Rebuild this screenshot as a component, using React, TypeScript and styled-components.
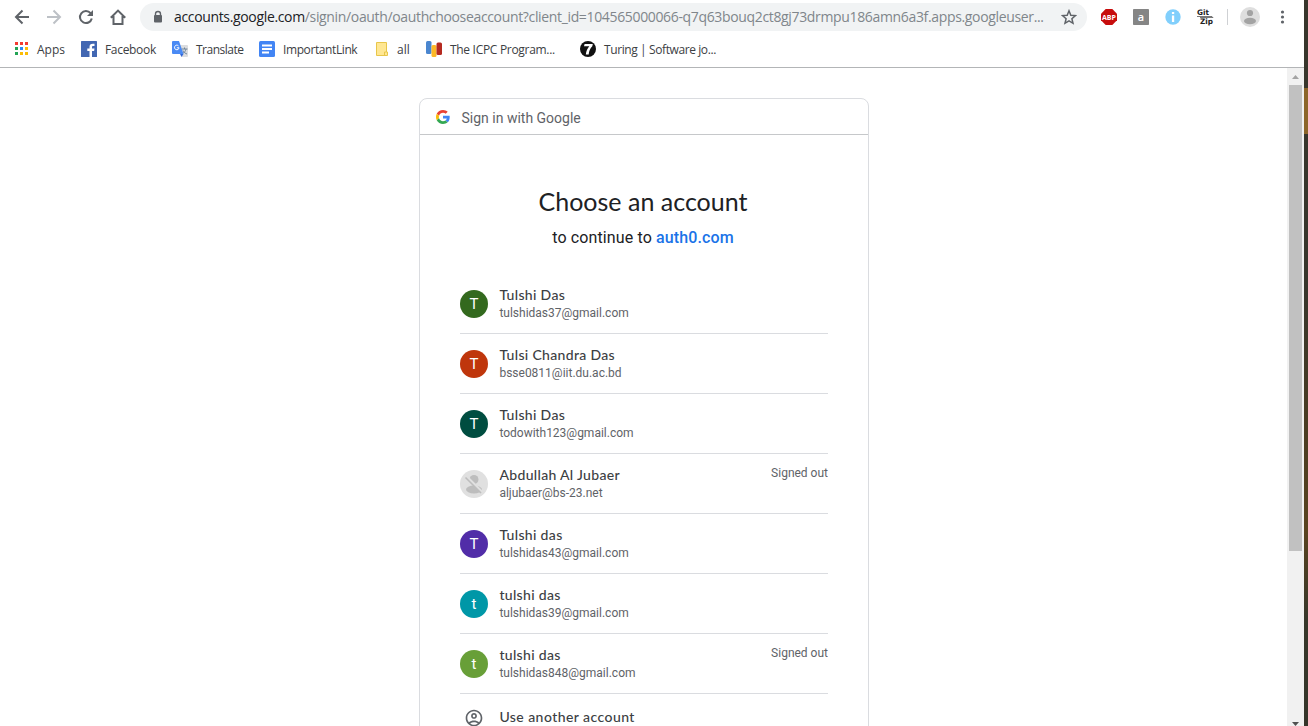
import React from "react";
import styled, { createGlobalStyle } from "styled-components";

const ui = `"Open Sans", "Noto Sans", sans-serif`;
const body = `Roboto, "Liberation Sans", sans-serif`;
const display = `Lato, Roboto, sans-serif`;

const GlobalStyle = createGlobalStyle`
  * { box-sizing: border-box; }
  body { margin: 0; background: #fff; overflow: hidden; }
`;

const Screen = styled.div`
  display: flex;
  width: 1308px;
  height: 726px;
  overflow: hidden;
`;

const Browser = styled.div`
  display: flex;
  flex-direction: column;
  width: 1304px;
  height: 726px;
  background: #fff;
`;

const Desktop = styled.div`
  width: 4px;
  height: 726px;
  background: linear-gradient(#38362c 0 88px, #8c6529 88px 134px, #38362c 134px 290px, #4a3c22 430px, #59431f 530px, #37372a 620px, #35352a 726px);
`;

const Toolbar = styled.div`
  display: flex;
  align-items: center;
  height: 34px;
  padding-left: 14px;
`;

const NavIcons = styled.div`
  display: flex;
  gap: 16px;
  width: 126px;
  svg { display: block; }
`;

const AddressBar = styled.div`
  display: flex;
  align-items: center;
  width: 947px;
  height: 28px;
  padding: 0 10px 0 12px;
  border-radius: 14px;
  background: #f1f3f4;
`;

const Url = styled.div`
  flex: 1;
  margin-left: 10px;
  white-space: nowrap;
  font: 14px/20px ${ui};
  letter-spacing: -0.345px;
  color: #80868b;
  span { color: #202124; }
`;

const Extensions = styled.div`
  display: flex;
  align-items: center;
  margin-left: 14px;
  gap: 16px;
  svg { display: block; overflow: visible; }
  svg:last-child { margin-left: -2px; }
`;

const Divider = styled.div`
  width: 1px;
  height: 16px;
  margin: 0 -4px 0 -3px;
  background: #cfd1d4;
`;

const Bookmarks = styled.div`
  display: flex;
  align-items: center;
  height: 34px;
  padding: 0 0 4px 13px;
  border-bottom: 1px solid #b3b5b7;
`;

const Bookmark = styled.div<{ $width: number; $spacing: number }>`
  display: flex;
  align-items: center;
  gap: 8px;
  width: ${(p) => p.$width}px;
  height: 18px;
  white-space: nowrap;
  font: 12px/16px ${ui};
  letter-spacing: ${(p) => p.$spacing}px;
  color: #3c4043;
  svg { flex: none; }
`;

const Label = styled.span`
  padding-top: 2px;
`;

const Viewport = styled.div`
  display: flex;
  flex: 1;
  min-height: 0;
`;

const Page = styled.main`
  display: flex;
  justify-content: center;
  flex: 1;
  padding-top: 30px;
  overflow: hidden;
`;

const Card = styled.section`
  width: 450px;
  height: 720px;
  margin-left: 1px;
  border: 1px solid #dadce0;
  border-radius: 8px;
`;

const CardHeader = styled.header`
  display: flex;
  align-items: center;
  gap: 11.5px;
  height: 36px;
  padding: 2px 0 0 16px;
  border-bottom: 1px solid #c6c8ca;
  font: 14px/20px ${body};
  color: #5f6368;
  svg { margin-top: -2px; }
`;

const Title = styled.h1`
  margin: 50px 0 0;
  padding-right: 2px;
  text-align: center;
  font: 400 25px/32px ${display};
  color: #202124;
`;

const Subtitle = styled.p`
  margin: 9px 0 0;
  padding-right: 2px;
  text-align: center;
  font: 16px/24px ${body};
  letter-spacing: 0.12px;
  color: #202124;
  b { font-weight: 500; color: #1a73e8; }
`;

const Accounts = styled.ul`
  margin: 24px 40px 0;
  padding: 0;
  list-style: none;
`;

const AccountRow = styled.li`
  display: flex;
  height: 60px;
  padding-top: 11px;
  border-bottom: 1px solid #dadce0;
`;

const Avatar = styled.div<{ $color: string }>`
  display: flex;
  align-items: center;
  justify-content: center;
  width: 28px;
  height: 28px;
  margin: 5px 11.4px 0 0;
  border-radius: 50%;
  background: ${(p) => p.$color};
  font: 15px/28px ${body};
  color: #fff;
`;

const Identity = styled.div`
  flex: 1;
`;

const Name = styled.div`
  font: 500 14px/19px ${display};
  letter-spacing: 0.33px;
  color: #3c4043;
`;

const Email = styled.div`
  margin-top: 1px;
  font: 12px/16px ${body};
  color: #5f6368;
`;

const Status = styled.div`
  font: 12px/16px ${body};
  color: #5f6368;
`;

const AnotherAccount = styled.li`
  display: flex;
  align-items: center;
  gap: 15.4px;
  height: 48px;
  padding-left: 4px;
  ${Name} { margin-top: -3px; letter-spacing: 0.44px; }
`;

const Scrollbar = styled.div`
  display: flex;
  flex-direction: column;
  align-items: center;
  width: 17px;
  background: #f1f1f1;
`;

const ScrollButton = styled.div`
  display: flex;
  height: 17px;
  svg { display: block; }
`;

const Thumb = styled.div`
  width: 13px;
  height: 466px;
  margin-bottom: auto;
  background: #c1c1c1;
`;

const accounts = [
  { name: "Tulshi Das", email: "tulshidas37@gmail.com", color: "#33691e" },
  { name: "Tulsi Chandra Das", email: "bsse0811@iit.du.ac.bd", color: "#bf360c" },
  { name: "Tulshi Das", email: "todowith123@gmail.com", color: "#004d40" },
  { name: "Abdullah Al Jubaer", email: "aljubaer@bs-23.net", color: "#e0e0e0", out: true, blank: true },
  { name: "Tulshi das", email: "tulshidas43@gmail.com", color: "#512da8" },
  { name: "tulshi das", email: "tulshidas39@gmail.com", color: "#0097a7" },
  { name: "tulshi das", email: "tulshidas848@gmail.com", color: "#689f38", out: true },
];

const Back = () => (
  <svg width="16" height="16" viewBox="0 0 16 16" fill="none" stroke="#5f6368" strokeWidth="2"><path d="M15 8H2.5M8.5 1.5L2 8l6.5 6.5" /></svg>
);
const Forward = () => (
  <svg width="16" height="16" viewBox="0 0 16 16" fill="none" stroke="#bdc1c6" strokeWidth="2"><path d="M1 8h12.5M7.5 1.5L14 8l-6.5 6.5" /></svg>
);
const Reload = () => (
  <svg width="16" height="16" viewBox="0 0 16 16"><path d="M12.6 4.2A6 6 0 1 0 13.8 9.5" fill="none" stroke="#5f6368" strokeWidth="2" /><path d="M15 1v6H9z" fill="#5f6368" /></svg>
);
const Home = () => (
  <svg width="16" height="16" viewBox="0 0 16 16" fill="none" stroke="#5f6368" strokeWidth="2"><path d="M.8 8.8L8 1.6l7.2 7.2M.8 8H3.5v7h9V8h2.7" /></svg>
);
const Lock = () => (
  <svg width="12" height="14" viewBox="0 0 12 14"><path d="M3.5 6V4a2.5 2.5 0 0 1 5 0v2" fill="none" stroke="#5f6368" strokeWidth="1.4" /><rect x="2" y="5" width="8" height="7.5" rx="1" fill="#5f6368" /></svg>
);
const Star = () => (
  <svg width="16" height="16" viewBox="0 0 16 16" fill="none" stroke="#5f6368" strokeWidth="1.5"><path d="M8 1.8l1.8 4.4 4.7.4-3.6 3.1 1.1 4.6L8 11.9l-4 2.4 1.1-4.6-3.6-3.1 4.7-.4z" /></svg>
);
const AppsIcon = () => {
  const colors = ["#f33b30", "#f33b30", "#f33b30", "#23a455", "#2a8af6", "#fbbc05", "#23a455", "#fbbc05", "#fbbc05"];
  return (
    <svg width="16" height="16">
      {colors.map((c, i) => <rect key={i} x={2 + (i % 3) * 5} y={1 + Math.floor(i / 3) * 5} width="3" height="3" fill={c} />)}
    </svg>
  );
};
const FacebookIcon = () => (
  <svg width="16" height="16"><rect width="16" height="16" rx=".6" fill="#4267b2" /><path d="M11 16v-6h2.1l.4-2.4H11V6.2c0-.8.3-1.2 1.3-1.2h1.2V2.8c-3.4-.6-5 .6-5 3.1v1.7H6.3V10h2.2v6z" fill="#fff" /></svg>
);
const TranslateIcon = () => (
  <svg width="17" height="16" viewBox="-1 0 17 16">
    <path d="M7 4h8a1 1 0 0 1 1 1v10a1 1 0 0 1-1 1H10z" fill="#dcdddf" />
    <path d="M9.5 8h6M12.5 6.5V8M10.5 12.5c2-1 3-2.5 3.5-4.5M11 9.5c1 2 2.5 3 4 3.5" fill="none" stroke="#70859a" />
    <path d="M1 0h6l4.5 13H1a1 1 0 0 1-1-1V1a1 1 0 0 1 1-1z" fill="#4a8af4" />
    <path d="M8 13h3.5L9.5 16z" fill="#3367d6" />
    <path d="M6.5 4.9A2.3 2.3 0 1 0 7.1 6.8H4.8" fill="none" stroke="#fff" />
  </svg>
);
const DocIcon = () => (
  <svg width="16" height="16"><rect width="16" height="16" rx="1.5" fill="#4285f4" /><path d="M3 4.5h10M3 8h10M3 11.500h7" stroke="#fff" strokeWidth="1.8" /></svg>
);
const NoteIcon = () => (
  <svg width="14" height="16"><path d="M1.5 1.5h10v9.5h1v3.5h-11z" fill="#ffe793" stroke="#e8c64a" /><path d="M9.5 14v-3h2" fill="none" stroke="#e8c64a" /></svg>
);
const IcpcIcon = () => (
  <svg width="16" height="16"><rect x="0" width="5.500" height="13" rx="1.5" fill="#4a86cf" /><rect x="5.5" y="4" width="5" height="12" rx="1.5" fill="#fcb827" /><rect x="10.5" y="1.5" width="5.5" height="12.5" rx="1.5" fill="#b52a20" /></svg>
);
const TuringIcon = () => (
  <svg width="16" height="16"><circle cx="8" cy="8" r="8" fill="#111" /><path d="M4 5.3L4.6 3h8.2l-.5 2.2C10 7.5 9 10 8.7 13.5H5.8C6.2 10 7.5 7.3 9.3 5.3z" fill="#fff" /></svg>
);
const AbpIcon = () => (
  <svg width="16" height="16"><path d="M4.7 0h6.6L16 4.7v6.6L11.3 16H4.7L0 11.3V4.7z" fill="#c70d0d" /><text x="8" y="10.9" textAnchor="middle" fontFamily="Open Sans" fontWeight="700" fontSize="7.8" textLength="14" lengthAdjust="spacingAndGlyphs" fill="#fff">ABP</text></svg>
);
const AIcon = () => (
  <svg width="16" height="16"><rect width="16" height="16" rx=".8" fill="#858585" /><text x="8" y="12" textAnchor="middle" fontFamily="Open Sans" fontWeight="600" fontSize="11" fill="#fff">a</text></svg>
);
const InfoIcon = () => (
  <svg width="16" height="16"><circle cx="8" cy="8" r="7.7" fill="#81cffc" /><path d="M6.9 3h2.3v2H6.900zM6.900 6.500h2.300v6.500H6.900z" fill="#fff" /></svg>
);
const GitZipIcon = () => (
  <svg width="17" height="17"><g fontFamily="DejaVu Sans" fontWeight="700" fontSize="7.5" fill="#222"><text x="0" y="6" textLength="12" lengthAdjust="spacingAndGlyphs">Git</text><text x="3" y="15.2" textLength="13" lengthAdjust="spacingAndGlyphs">Zip</text></g><path d="M0 7.5h15l1 1H3" fill="none" stroke="#555" strokeWidth=".8" /></svg>
);
const ProfileIcon = () => (
  <svg width="20" height="20"><circle cx="10" cy="10" r="10" fill="#dedede" /><circle cx="10" cy="6" r="3.1" fill="#a3a3a3" /><ellipse cx="10" cy="14" rx="6" ry="3.2" fill="#a3a3a3" /></svg>
);
const MenuIcon = () => (
  <svg width="16" height="16" fill="#5f6368"><circle cx="8.5" cy="3" r="1.6" /><circle cx="8.5" cy="8" r="1.6" /><circle cx="8.5" cy="13" r="1.6" /></svg>
);
const GoogleIcon = () => (
  <svg width="14" height="14" viewBox="0 0 48 48">
    <path fill="#ea4335" d="M24 9.500c3.540 0 6.710 1.220 9.210 3.600l6.850-6.850C35.900 2.380 30.470 0 24 0 14.620 0 6.510 5.380 2.560 13.220l7.980 6.190C12.430 13.720 17.740 9.500 24 9.500z" />
    <path fill="#4285f4" d="M46.980 24.550c0-1.570-.15-3.090-.38-4.550H24v9.020h12.940c-.58 2.960-2.260 5.480-4.780 7.180l7.730 6c4.510-4.180 7.090-10.360 7.090-17.650z" />
    <path fill="#fbbc05" d="M10.530 28.590c-.48-1.450-.76-2.990-.76-4.590s.27-3.140.76-4.590l-7.980-6.190C.92 16.460 0 20.120 0 24c0 3.880.92 7.540 2.560 10.780l7.970-6.190z" />
    <path fill="#34a853" d="M24 48c6.480 0 11.930-2.130 15.890-5.810l-7.730-6c-2.150 1.450-4.920 2.300-8.160 2.300-6.260 0-11.570-4.220-13.470-9.910l-7.980 6.190C6.510 42.620 14.620 48 24 48z" />
  </svg>
);
const BlankAvatar = () => (
  <svg width="28" height="28"><circle cx="14" cy="9.5" r="4.5" fill="#bdbdbd" /><ellipse cx="14" cy="19.5" rx="8" ry="4" fill="#bdbdbd" /><path d="M6.5 6.5l15.500 15.500" stroke="#e0e0e0" strokeWidth="2.5" /><path d="M5.500 7.500l15.500 15.500" stroke="#bdbdbd" strokeWidth="1.6" /></svg>
);
const UserIcon = () => (
  <svg width="20" height="20" viewBox="0 0 24 24" fill="#5f6368"><path d="M12 2C6.480 2 2 6.480 2 12s4.480 10 10 10 10-4.480 10-10S17.520 2 12 2zM7.350 18.500C8.660 17.560 10.260 17 12 17s3.340.56 4.650 1.500C15.340 19.440 13.740 20 12 20s-3.340-.56-4.650-1.500zm10.790-1.380C16.450 15.800 14.320 15 12 15s-4.450.8-6.140 2.120C4.700 15.730 4 13.950 4 12c0-4.420 3.580-8 8-8s8 3.580 8 8c0 1.950-.7 3.730-1.860 5.120zM12 6c-1.930 0-3.500 1.570-3.500 3.500S10.070 13 12 13s3.500-1.570 3.500-3.500S13.930 6 12 6zm0 5c-.83 0-1.500-.67-1.500-1.500S11.170 8 12 8s1.500.67 1.500 1.500S12.830 11 12 11z" /></svg>
);

export default function App() {
  return (
    <Screen>
      <GlobalStyle />
      <Browser>
        <Toolbar>
          <NavIcons><Back /><Forward /><Reload /><Home /></NavIcons>
          <AddressBar>
            <Lock />
            <Url><span>accounts.google.com</span>/signin/oauth/oauthchooseaccount?client_id=104565000066-q7q63bouq2ct8gj73drmpu186amn6a3f.apps.googleuser...</Url>
            <Star />
          </AddressBar>
          <Extensions>
            <AbpIcon /><AIcon /><InfoIcon /><GitZipIcon /><Divider /><ProfileIcon /><MenuIcon />
          </Extensions>
        </Toolbar>
        <Bookmarks>
          <Bookmark $width={68} $spacing={0}><AppsIcon /><Label>Apps</Label></Bookmark>
          <Bookmark $width={90} $spacing={-0.32}><FacebookIcon /><Label>Facebook</Label></Bookmark>
          <Bookmark $width={88} $spacing={-0.5}><TranslateIcon /><Label>Translate</Label></Bookmark>
          <Bookmark $width={116} $spacing={-0.4}><DocIcon /><Label>ImportantLink</Label></Bookmark>
          <Bookmark $width={51} $spacing={0}><NoteIcon /><Label>all</Label></Bookmark>
          <Bookmark $width={154} $spacing={-0.3}><IcpcIcon /><Label>The ICPC Program...</Label></Bookmark>
          <Bookmark $width={160} $spacing={-0.4}><TuringIcon /><Label>Turing | Software jo...</Label></Bookmark>
        </Bookmarks>
        <Viewport>
          <Page>
            <Card>
              <CardHeader><GoogleIcon />Sign in with Google</CardHeader>
              <Title>Choose an account</Title>
              <Subtitle>to continue to <b>auth0.com</b></Subtitle>
              <Accounts>
                {accounts.map((a) => (
                  <AccountRow key={a.email}>
                    <Avatar $color={a.color}>{a.blank ? <BlankAvatar /> : a.name[0]}</Avatar>
                    <Identity>
                      <Name>{a.name}</Name>
                      <Email>{a.email}</Email>
                    </Identity>
                    {a.out && <Status>Signed out</Status>}
                  </AccountRow>
                ))}
                <AnotherAccount><UserIcon /><Name>Use another account</Name></AnotherAccount>
              </Accounts>
            </Card>
          </Page>
          <Scrollbar>
            <ScrollButton><svg width="17" height="17"><path d="M5 11h7L8.5 7z" fill="#a3a3a3" /></svg></ScrollButton>
            <Thumb />
            <ScrollButton><svg width="17" height="17"><path d="M5 13h7l-3.5 4z" fill="#505050" /></svg></ScrollButton>
          </Scrollbar>
        </Viewport>
      </Browser>
      <Desktop />
    </Screen>
  );
}
